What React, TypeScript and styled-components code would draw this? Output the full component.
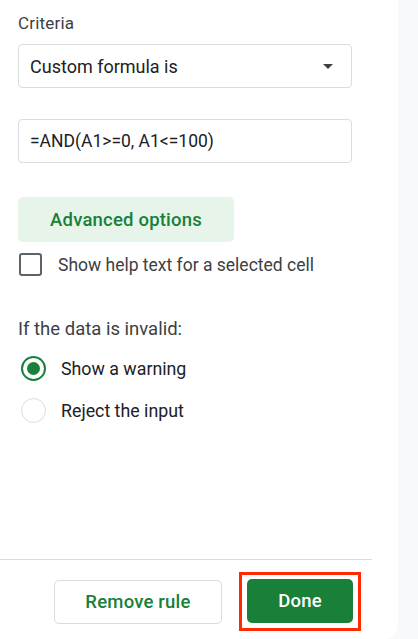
import styled, { createGlobalStyle } from 'styled-components';

const GlobalStyle = createGlobalStyle`
  html, body {
    margin: 0;
    padding: 0;
    background: #f8f9fb;
  }
  body {
    font-family: Roboto, "Liberation Sans", Arial, sans-serif;
    color: #202124;
  }
`;

const Panel = styled.div`
  width: 398px;
  height: 639px;
  background: #ffffff;
  border-bottom-right-radius: 14px;
  display: flex;
  flex-direction: column;
  box-sizing: border-box;
`;

const Body = styled.div`
  flex: 1;
  padding: 13px 46px 0 18px;
  display: flex;
  flex-direction: column;
`;

const Label = styled.div`
  font-size: 17px;
  letter-spacing: 0.2px;
  line-height: 20px;
  color: #3c4043;
`;

const Field = styled.div<{ $gap?: number; $size?: number }>`
  margin-top: ${(p) => p.$gap ?? 0}px;
  height: 44px;
  box-sizing: border-box;
  border: 1px solid #dadce0;
  border-radius: 4px;
  display: flex;
  align-items: center;
  justify-content: space-between;
  padding: 0 18px 0 11px;
  font-size: ${(p) => p.$size ?? 18}px;
  color: #202124;
`;

const Arrow = styled.span`
  width: 0;
  height: 0;
  border-left: 5px solid transparent;
  border-right: 5px solid transparent;
  border-top: 5px solid #3c4043;
`;

const Tonal = styled.button`
  margin-top: 34px;
  width: 216px;
  height: 45px;
  border: none;
  border-radius: 5px;
  background: #e6f4ea;
  color: #188038;
  font-family: inherit;
  font-size: 18.5px;
  font-weight: 500;
  letter-spacing: 0.2px;
`;

const CheckRow = styled.label`
  margin-top: 11px;
  display: flex;
  align-items: center;
  gap: 16px;
  font-size: 17.5px;
  color: #3c4043;
`;

const Box = styled.span`
  width: 23px;
  height: 23px;
  box-sizing: border-box;
  border: 2px solid #5f6368;
  border-radius: 3px;
  margin-left: 1px;
`;

const Section = styled.div`
  margin-top: 43px;
  font-size: 18.5px;
  line-height: 20px;
  color: #3c4043;
`;

const RadioRow = styled.div<{ $gap: number }>`
  margin-top: ${(p) => p.$gap}px;
  display: flex;
  align-items: center;
  gap: 15px;
  font-size: 17.8px;
  color: #202124;
`;

const Radio = styled.span<{ $on?: boolean }>`
  width: 25px;
  height: 25px;
  box-sizing: border-box;
  border-radius: 50%;
  margin-left: 3px;
  border: ${(p) => (p.$on ? '2px solid #188038' : '1px solid #dadce0')};
  display: flex;
  align-items: center;
  justify-content: center;
  &::after {
    content: '';
    display: ${(p) => (p.$on ? 'block' : 'none')};
    width: 13px;
    height: 13px;
    border-radius: 50%;
    background: #188038;
  }
`;

const Footer = styled.div`
  width: 372px;
  box-sizing: border-box;
  border-top: 1px solid #dadce0;
  padding: 12px 11px 8px 0;
  display: flex;
  align-items: center;
  justify-content: flex-end;
  gap: 17px;
`;

const Button = styled.button<{ $primary?: boolean }>`
  height: 44px;
  padding: 0;
  border-radius: 5px;
  font-family: inherit;
  font-size: 18.5px;
  font-weight: 500;
  letter-spacing: 0.2px;
  border: ${(p) => (p.$primary ? 'none' : '1px solid #dadce0')};
  background: ${(p) => (p.$primary ? '#188038' : '#ffffff')};
  color: ${(p) => (p.$primary ? '#ffffff' : '#188038')};
  width: ${(p) => (p.$primary ? 106 : 168)}px;
`;

const Highlight = styled.div`
  display: flex;
  border: 3px solid #ff2a00;
  padding: 4px 5px 5px;
`;

export default function App() {
  return (
    <>
      <GlobalStyle />
      <Panel>
        <Body>
          <Label>Criteria</Label>
          <Field $gap={11}>
            Custom formula is
            <Arrow />
          </Field>
          <Field $gap={31} $size={17.5}>
            =AND(A1&gt;=0, A1&lt;=100)
          </Field>
          <Tonal>Advanced options</Tonal>
          <CheckRow>
            <Box />
            Show help text for a selected cell
          </CheckRow>
          <Section>If the data is invalid:</Section>
          <RadioRow $gap={17}>
            <Radio $on />
            Show a warning
          </RadioRow>
          <RadioRow $gap={17}>
            <Radio />
            Reject the input
          </RadioRow>
        </Body>
        <Footer>
          <Button>Remove rule</Button>
          <Highlight>
            <Button $primary>Done</Button>
          </Highlight>
        </Footer>
      </Panel>
    </>
  );
}
